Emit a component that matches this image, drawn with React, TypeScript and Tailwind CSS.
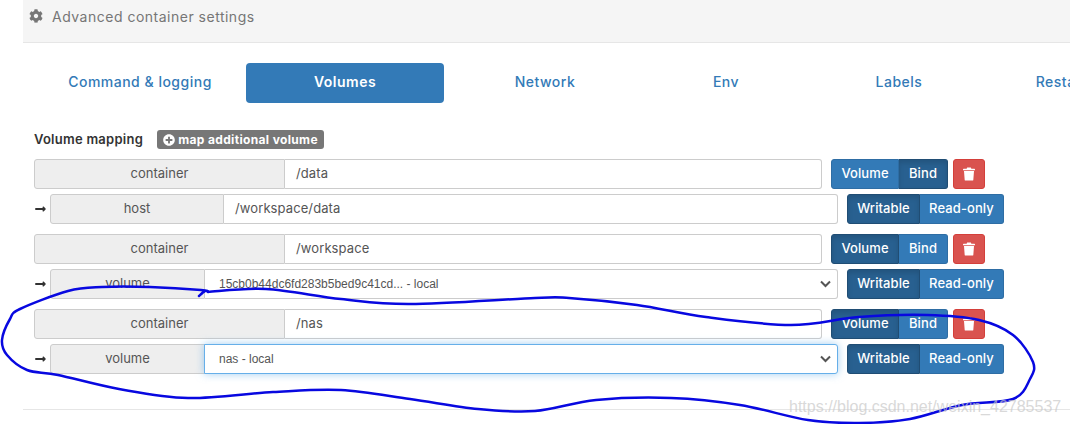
import { FaCog, FaLongArrowAltRight, FaPlusCircle } from 'react-icons/fa';

const UI_FONT = 'font-["Inter","Open_Sans",sans-serif]';

type Point = [number, number];

// hand drawn annotation, points read off the screenshot
const scribble: Point[] = [
  [199, 296], [205, 291], [208, 292], [201, 290], [150, 287], [102, 287], [68, 291], [20, 309], [10, 319], [2, 340], [7, 355],
  [27, 370], [58, 375], [119, 389], [188, 398], [273, 392], [341, 390], [410, 399], [478, 409], [535, 411],
  [596, 400], [671, 398], [740, 405], [808, 420], [859, 423], [910, 419], [962, 405], [1013, 399], [1030, 379],
  [1033, 362], [1013, 335], [979, 320], [927, 315], [859, 317], [791, 325], [706, 317], [637, 305], [569, 298],
  [535, 298], [410, 304], [341, 299], [266, 289], [208, 292],
];

function smoothPath(pts: Point[]) {
  let d = `M${pts[0][0]} ${pts[0][1]}`;
  for (let i = 0; i < pts.length - 1; i++) {
    const p0 = pts[Math.max(i - 1, 0)];
    const p1 = pts[i];
    const p2 = pts[i + 1];
    const p3 = pts[Math.min(i + 2, pts.length - 1)];
    const c1x = p1[0] + (p2[0] - p0[0]) / 6;
    const c1y = p1[1] + (p2[1] - p0[1]) / 6;
    const c2x = p2[0] - (p3[0] - p1[0]) / 6;
    const c2y = p2[1] - (p3[1] - p1[1]) / 6;
    d += ` C${c1x} ${c1y} ${c2x} ${c2y} ${p2[0]} ${p2[1]}`;
  }
  return d;
}

function Toggle({ left, right, active, leftWidth, rightWidth }: { left: string; right: string; active: 'left' | 'right'; leftWidth: string; rightWidth: string }) {
  const on = 'bg-[#286090] border-[#204d74] shadow-[inset_0_3px_5px_rgba(0,0,0,0.125)]';
  const off = 'bg-[#337ab7] border-[#2e6da4]';
  return (
    <div className="flex h-[30px] text-[13px] font-medium tracking-[0.1px] text-white">
      <div className={`flex items-center justify-center rounded-l-[3px] border ${leftWidth} ${active === 'left' ? on : off}`}>{left}</div>
      <div className={`flex items-center justify-center rounded-r-[3px] border border-l-0 ${rightWidth} ${active === 'right' ? on : off}`}>{right}</div>
    </div>
  );
}

function Addon({ label, width }: { label: string; width: string }) {
  return (
    <div className={`flex h-full shrink-0 items-center justify-center rounded-l-[3px] border border-[#ccc] bg-[#eee] text-[13px] text-[#555] ${width}`}>
      {label}
    </div>
  );
}

function TrashIcon() {
  return (
    <svg width="12" height="14" viewBox="0 0 12 14" fill="#fff">
      <path d="M4.2 0.5h3.6l0.6 1.3H11.4c0.3 0 0.6 0.3 0.6 0.6v0.9H0V2.4c0-0.3 0.3-0.6 0.6-0.6h3z" />
      <path d="M1 4h10l-0.7 8.9c0 0.4-0.4 0.7-0.8 0.7H2.5c-0.4 0-0.8-0.3-0.8-0.7z" />
    </svg>
  );
}

function ContainerRow({ path, type }: { path: string; type: 'volume' | 'bind' }) {
  return (
    <div className="flex h-[30px] items-center">
      <div className="flex h-full w-[788px]">
        <Addon label="container" width="w-[251px]" />
        <div className="flex flex-1 items-center rounded-r-[3px] border border-l-0 border-[#ccc] bg-white pl-[11px] text-[13px] tracking-[0.1px] text-[#555]">
          {path}
        </div>
      </div>
      <div className="ml-[9px]">
        <Toggle left="Volume" right="Bind" active={type === 'volume' ? 'left' : 'right'} leftWidth="w-[68px]" rightWidth="w-[49px]" />
      </div>
      <div className="ml-[5px] flex h-[30px] w-[32px] items-center justify-center rounded-[3px] border border-[#d43f3a] bg-[#d9534f]">
        <TrashIcon />
      </div>
    </div>
  );
}

function Chevron() {
  return (
    <svg className="absolute right-[6px] top-[10px]" width="11" height="8" viewBox="0 0 11 8" fill="none">
      <path d="M1 1.5 L5.5 6 L10 1.5" stroke="#555" strokeWidth="2" />
    </svg>
  );
}

function MountRow({ kind, value, select, focused }: { kind: string; value: string; select?: boolean; focused?: boolean }) {
  const isHost = kind === 'host';
  return (
    <div className="mt-[5px] flex h-[30px] items-center">
      <FaLongArrowAltRight className="mr-[3px] h-[12px] w-[13px] text-[#333]" />
      <div className="flex h-full w-[788px]">
        <Addon label={kind} width={isHost ? 'w-[174px]' : 'w-[155px]'} />
        <div
          className={`relative flex flex-1 items-center rounded-r-[3px] border bg-white ${
            select ? 'pl-[14px] font-["Liberation_Sans",sans-serif] text-[12px]' : 'pl-[11px] text-[13px] tracking-[0.1px]'
          } text-[#555] ${
            focused ? '-ml-px border-[#66afe9] shadow-[0_0_8px_rgba(102,175,233,0.6)]' : 'border-l-0 border-[#ccc]'
          }`}
        >
          {value}
          {select && <Chevron />}
        </div>
      </div>
      <div className="ml-[9px]">
        <Toggle left="Writable" right="Read-only" active="left" leftWidth="w-[73px]" rightWidth="w-[84px]" />
      </div>
    </div>
  );
}

const tabs = [
  { label: 'Command & logging', width: 'w-[212px]' },
  { label: 'Volumes', width: 'w-[198px]', active: true },
  { label: 'Network', width: 'w-[202px]' },
  { label: 'Env', width: 'w-[160px]' },
  { label: 'Labels', width: 'w-[186px]' },
  { label: 'Restart policy', width: 'w-[186px]' },
];

export default function App() {
  return (
    <div className={`relative h-[424px] w-[1070px] overflow-hidden bg-white pl-[23px] ${UI_FONT}`}>
      {/* Widget header */}
      <div className="flex h-[43px] items-start border-b border-[#e6e6e6] bg-[#f5f5f5] pl-[6px] pt-[6px] text-[14px] text-[#767676]">
        <FaCog className="mt-[3px] h-[14px] w-[14px]" />
        <span className="ml-[9px] tracking-[0.5px]">Advanced container settings</span>
      </div>

      <div className="pl-[11px]">
        {/* Tabs */}
        <div className="mt-[20px] flex h-[40px] w-[1100px] pb-[4px] text-[14px] font-medium tracking-[0.5px] text-[#337ab7]">
          {tabs.map((tab) => (
            <div key={tab.label} className={`flex h-[40px] shrink-0 items-center justify-center rounded-[4px] pb-[3px] ${tab.width} ${tab.active ? 'bg-[#337ab7] font-semibold text-white' : ''}`}>
              <span className="whitespace-nowrap">{tab.label}</span>
            </div>
          ))}
        </div>

        {/* Volume mapping */}
        <div className="mt-[27px] flex h-[19px] items-center">
          <span className="text-[13px] font-semibold tracking-[0.25px] text-[#333]">Volume mapping</span>
          <span className="ml-[14px] flex h-[19px] w-[167px] items-center justify-center gap-[3px] rounded-[3px] bg-[#777] text-[12px] font-bold tracking-[0.35px] text-white">
            <FaPlusCircle className="h-[12px] w-[12px]" />
            map additional volume
          </span>
        </div>

        <div className="mt-[10px]">
          <ContainerRow path="/data" type="bind" />
          <MountRow kind="host" value="/workspace/data" />
        </div>
        <div className="mt-[10px]">
          <ContainerRow path="/workspace" type="volume" />
          <MountRow kind="volume" value="15cb0b44dc6fd283b5bed9c41cd... - local" select />
        </div>
        <div className="mt-[10px]">
          <ContainerRow path="/nas" type="volume" />
          <MountRow kind="volume" value="nas - local" select focused />
        </div>
      </div>

      <div className="mt-[35px] h-px bg-[#e6e6e6]" />

      {/* Annotation and watermark sit on top of the screenshot */}
      <svg className="absolute left-0 top-0" width="1070" height="424" viewBox="0 0 1070 424" fill="none">
        <path d={smoothPath(scribble)} stroke="#0808e0" strokeWidth="2.5" strokeLinejoin="round" strokeLinecap="round" />
      </svg>
      <span className='absolute left-[789px] top-[395px] whitespace-nowrap font-["Liberation_Sans",sans-serif] text-[16px] text-[#c8c8c8]/70'>
        https://blog.csdn.net/weixin_42785537
      </span>
    </div>
  );
}
